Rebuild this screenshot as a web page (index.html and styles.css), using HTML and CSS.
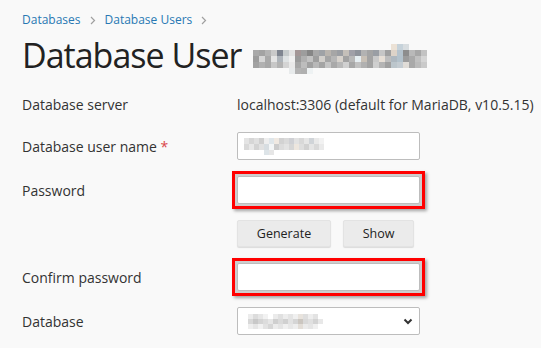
FILE: index.html
```html
<!DOCTYPE html>
<html lang="en">
<head>
  <meta charset="UTF-8" />
  <title>Database User</title>
  <link rel="stylesheet" href="styles.css">
</head>
<body>
  <!-- Breadcrumbs -->
  <nav class="breadcrumbs">
    <a href="#databases">Databases</a>
    <svg class="crumb-sep" width="6" height="9" viewBox="0 0 6 9"><path d="M1 1l3.5 3.5L1 8" fill="none" stroke="#a0a0a0" stroke-width="1.2"/></svg>
    <a href="#users">Database Users</a>
    <svg class="crumb-sep" width="6" height="9" viewBox="0 0 6 9"><path d="M1 1l3.5 3.5L1 8" fill="none" stroke="#a0a0a0" stroke-width="1.2"/></svg>
  </nav>

  <!-- Title (user name is blurred) -->
  <h1 class="page-title">Database User
    <svg class="mosaic-title" width="175" height="33" viewBox="0 0 175 33">
      <!-- ascenders -->
      <rect x="138" y="2" width="6" height="6" fill="#ece2d6"/>
      <rect x="144" y="2" width="6" height="6" fill="#c6d2da"/>
      <rect x="150" y="2" width="6" height="6" fill="#d8dde0"/>
      <!-- row 1 -->
      <rect x="0" y="8" width="6" height="6" fill="#a9a9a9"/>
      <rect x="6" y="8" width="6" height="6" fill="#a3a3a3"/>
      <rect x="12" y="8" width="6" height="6" fill="#b4b4b4"/>
      <rect x="18" y="8" width="6" height="6" fill="#c9c9c9"/>
      <rect x="24" y="8" width="6" height="6" fill="#7f8590"/>
      <rect x="30" y="8" width="6" height="6" fill="#c6cbcc"/>
      <rect x="36" y="8" width="6" height="6" fill="#e2e2e2"/>
      <rect x="42" y="8" width="6" height="6" fill="#a39696"/>
      <rect x="48" y="8" width="6" height="6" fill="#9d9d9d"/>
      <rect x="54" y="8" width="6" height="6" fill="#868686"/>
      <rect x="60" y="8" width="6" height="6" fill="#a8a8a8"/>
      <rect x="66" y="8" width="6" height="6" fill="#9fa2a6"/>
      <rect x="72" y="8" width="6" height="6" fill="#b9b4ae"/>
      <rect x="78" y="8" width="6" height="6" fill="#a6a6a6"/>
      <rect x="84" y="8" width="6" height="6" fill="#9b9ea3"/>
      <rect x="90" y="8" width="6" height="6" fill="#c4bfb9"/>
      <rect x="96" y="8" width="6" height="6" fill="#a0a0a8"/>
      <rect x="102" y="8" width="6" height="6" fill="#8f939b"/>
      <rect x="108" y="8" width="6" height="6" fill="#b2b2b2"/>
      <rect x="114" y="8" width="6" height="6" fill="#a4a4a4"/>
      <rect x="120" y="8" width="6" height="6" fill="#9a9ea4"/>
      <rect x="126" y="8" width="6" height="6" fill="#c6c6c6"/>
      <rect x="132" y="8" width="6" height="6" fill="#a0a0a0"/>
      <rect x="138" y="8" width="6" height="6" fill="#ddd3c8"/>
      <rect x="144" y="8" width="6" height="6" fill="#b5c3cd"/>
      <rect x="150" y="8" width="6" height="6" fill="#8d8d8d"/>
      <rect x="156" y="8" width="6" height="6" fill="#b9b9b9"/>
      <rect x="162" y="8" width="6" height="6" fill="#a7a7a7"/>
      <rect x="168" y="8" width="6" height="6" fill="#c3c3c3"/>
      <!-- row 2 -->
      <rect x="0" y="14" width="6" height="6" fill="#9c9c9c"/>
      <rect x="6" y="14" width="6" height="6" fill="#d6d6d6"/>
      <rect x="12" y="14" width="6" height="6" fill="#a9a9a9"/>
      <rect x="18" y="14" width="6" height="6" fill="#e4e4e4"/>
      <rect x="24" y="14" width="6" height="6" fill="#aeb4ba"/>
      <rect x="30" y="14" width="6" height="6" fill="#dfe3e4"/>
      <rect x="36" y="14" width="6" height="6" fill="#f0f0f0"/>
      <rect x="42" y="14" width="6" height="6" fill="#9a9a9a"/>
      <rect x="48" y="14" width="6" height="6" fill="#b0b0b0"/>
      <rect x="54" y="14" width="6" height="6" fill="#c2c2c2"/>
      <rect x="60" y="14" width="6" height="6" fill="#9e9e9e"/>
      <rect x="66" y="14" width="6" height="6" fill="#d2cfcb"/>
      <rect x="72" y="14" width="6" height="6" fill="#a5a5a5"/>
      <rect x="78" y="14" width="6" height="6" fill="#b6b6b6"/>
      <rect x="84" y="14" width="6" height="6" fill="#d7d2cc"/>
      <rect x="90" y="14" width="6" height="6" fill="#a2a2a2"/>
      <rect x="96" y="14" width="6" height="6" fill="#b8b8b8"/>
      <rect x="102" y="14" width="6" height="6" fill="#e6eef2"/>
      <rect x="108" y="14" width="6" height="6" fill="#c8c0b6"/>
      <rect x="114" y="14" width="6" height="6" fill="#a3a3a3"/>
      <rect x="120" y="14" width="6" height="6" fill="#c9c9c9"/>
      <rect x="126" y="14" width="6" height="6" fill="#e7dfd6"/>
      <rect x="132" y="14" width="6" height="6" fill="#bdbdbd"/>
      <rect x="138" y="14" width="6" height="6" fill="#aeb8c0"/>
      <rect x="144" y="14" width="6" height="6" fill="#b3c2cc"/>
      <rect x="150" y="14" width="6" height="6" fill="#9c9c9c"/>
      <rect x="156" y="14" width="6" height="6" fill="#a9a9a9"/>
      <rect x="162" y="14" width="6" height="6" fill="#c0c0c0"/>
      <rect x="168" y="14" width="6" height="6" fill="#d5d5d5"/>
      <!-- row 3 -->
      <rect x="0" y="20" width="6" height="6" fill="#a2a2a2"/>
      <rect x="6" y="20" width="6" height="6" fill="#b1b1b1"/>
      <rect x="12" y="20" width="6" height="6" fill="#a8a8a8"/>
      <rect x="18" y="20" width="6" height="6" fill="#c7c7c7"/>
      <rect x="24" y="20" width="6" height="6" fill="#b3b3b3"/>
      <rect x="30" y="20" width="6" height="6" fill="#d4d4d4"/>
      <rect x="36" y="20" width="6" height="6" fill="#e9e9e9"/>
      <rect x="42" y="20" width="6" height="6" fill="#a6a6a6"/>
      <rect x="48" y="20" width="6" height="6" fill="#bdbdbd"/>
      <rect x="54" y="20" width="6" height="6" fill="#a1a1a1"/>
      <rect x="60" y="20" width="6" height="6" fill="#b8b8b8"/>
      <rect x="66" y="20" width="6" height="6" fill="#a4a4a4"/>
      <rect x="72" y="20" width="6" height="6" fill="#c5c5c5"/>
      <rect x="78" y="20" width="6" height="6" fill="#a9a9a9"/>
      <rect x="84" y="20" width="6" height="6" fill="#b9b9b9"/>
      <rect x="90" y="20" width="6" height="6" fill="#d0d0d0"/>
      <rect x="96" y="20" width="6" height="6" fill="#a7a7a7"/>
      <rect x="102" y="20" width="6" height="6" fill="#c1c1c1"/>
      <rect x="108" y="20" width="6" height="6" fill="#b1b1b1"/>
      <rect x="114" y="20" width="6" height="6" fill="#a3a3a3"/>
      <rect x="120" y="20" width="6" height="6" fill="#cfcfcf"/>
      <rect x="126" y="20" width="6" height="6" fill="#b4b4b4"/>
      <rect x="132" y="20" width="6" height="6" fill="#a0a0a0"/>
      <rect x="138" y="20" width="6" height="6" fill="#bcc6cc"/>
      <rect x="144" y="20" width="6" height="6" fill="#c4ccd2"/>
      <rect x="150" y="20" width="6" height="6" fill="#e0dcd7"/>
      <rect x="156" y="20" width="6" height="6" fill="#a9a9a9"/>
      <rect x="162" y="20" width="6" height="6" fill="#bbbbbb"/>
      <rect x="168" y="20" width="6" height="6" fill="#cacaca"/>
      <!-- underscore -->
      <rect x="36" y="26" width="6" height="6" fill="#e8ebec"/>
      <rect x="42" y="26" width="6" height="6" fill="#b3b3b3"/>
      <rect x="48" y="26" width="6" height="6" fill="#b0b0b0"/>
      <rect x="54" y="26" width="6" height="6" fill="#eef2f3"/>
    </svg>
  </h1>

  <!-- Form -->
  <form class="form">
    <div class="row row-static">
      <div class="label">Database server</div>
      <div class="value">localhost:3306 (default for MariaDB, v10.5.15)</div>
    </div>

    <div class="row">
      <div class="label">Database user name <span class="required">*</span></div>
      <div class="field">
        <svg width="85" height="17" viewBox="0 0 85 17">
          <rect x="0" y="0" width="5" height="6" fill="#e4e4e4"/>
          <rect x="5" y="0" width="5" height="6" fill="#d6d6d6"/>
          <rect x="10" y="0" width="5" height="6" fill="#e0e0e0"/>
          <rect x="15" y="0" width="5" height="6" fill="#cfcfcf"/>
          <rect x="20" y="0" width="5" height="6" fill="#eeeeee"/>
          <rect x="25" y="0" width="5" height="6" fill="#dfe6ea"/>
          <rect x="30" y="0" width="5" height="6" fill="#f0e9e2"/>
          <rect x="35" y="0" width="5" height="6" fill="#d2d2d2"/>
          <rect x="40" y="0" width="5" height="6" fill="#dadada"/>
          <rect x="45" y="0" width="5" height="6" fill="#cfd0d4"/>
          <rect x="50" y="0" width="5" height="6" fill="#e2e2e2"/>
          <rect x="55" y="0" width="5" height="6" fill="#d8d8d8"/>
          <rect x="60" y="0" width="5" height="6" fill="#e6e6e6"/>
          <rect x="65" y="0" width="5" height="6" fill="#d0d4d8"/>
          <rect x="70" y="0" width="5" height="6" fill="#e9e9e9"/>
          <rect x="75" y="0" width="5" height="6" fill="#f2f2f2"/>
          <rect x="0" y="6" width="5" height="6" fill="#d9d9d9"/>
          <rect x="5" y="6" width="5" height="6" fill="#e8e8e8"/>
          <rect x="10" y="6" width="5" height="6" fill="#d3d3d3"/>
          <rect x="15" y="6" width="5" height="6" fill="#e1e1e1"/>
          <rect x="20" y="6" width="5" height="6" fill="#d7dde1"/>
          <rect x="25" y="6" width="5" height="6" fill="#f4f6f7"/>
          <rect x="30" y="6" width="5" height="6" fill="#cccccc"/>
          <rect x="35" y="6" width="5" height="6" fill="#dcdcdc"/>
          <rect x="40" y="6" width="5" height="6" fill="#e3e3e3"/>
          <rect x="45" y="6" width="5" height="6" fill="#d6d6d6"/>
          <rect x="50" y="6" width="5" height="6" fill="#ede6de"/>
          <rect x="55" y="6" width="5" height="6" fill="#dedede"/>
          <rect x="60" y="6" width="5" height="6" fill="#d1d1d1"/>
          <rect x="65" y="6" width="5" height="6" fill="#e5e5e5"/>
          <rect x="70" y="6" width="5" height="6" fill="#d9d9d9"/>
          <rect x="75" y="6" width="5" height="6" fill="#eaeaea"/>
          <rect x="20" y="12" width="5" height="5" fill="#dde4e8"/>
          <rect x="25" y="12" width="5" height="5" fill="#e6e6e6"/>
        </svg>
      </div>
    </div>

    <div class="row">
      <div class="label">Password</div>
      <div class="highlight"><input class="input" type="password"></div>
    </div>

    <div class="row row-buttons">
      <button type="button" class="btn btn-generate">Generate</button>
      <button type="button" class="btn btn-show">Show</button>
    </div>

    <div class="row">
      <div class="label">Confirm password</div>
      <div class="highlight"><input class="input" type="password"></div>
    </div>

    <div class="row">
      <div class="label">Database</div>
      <div class="field field-select">
        <svg width="76" height="15" viewBox="0 0 76 15">
          <rect x="0" y="0" width="5" height="5" fill="#ececec"/>
          <rect x="5" y="0" width="5" height="5" fill="#dcdcdc"/>
          <rect x="10" y="0" width="5" height="5" fill="#e6e6e6"/>
          <rect x="15" y="0" width="5" height="5" fill="#f2f2f2"/>
          <rect x="25" y="0" width="5" height="5" fill="#ebebeb"/>
          <rect x="30" y="0" width="5" height="5" fill="#e0e0e0"/>
          <rect x="35" y="0" width="5" height="5" fill="#ededed"/>
          <rect x="40" y="0" width="5" height="5" fill="#e4e4e4"/>
          <rect x="45" y="0" width="5" height="5" fill="#f0f0f0"/>
          <rect x="50" y="0" width="5" height="5" fill="#e8e3dd"/>
          <rect x="55" y="0" width="5" height="5" fill="#dedede"/>
          <rect x="60" y="0" width="5" height="5" fill="#eeeeee"/>
          <rect x="65" y="0" width="5" height="5" fill="#e3e3e3"/>
          <rect x="0" y="5" width="5" height="5" fill="#d8d8d8"/>
          <rect x="5" y="5" width="5" height="5" fill="#c8c8c8"/>
          <rect x="10" y="5" width="5" height="5" fill="#d4d4d4"/>
          <rect x="15" y="5" width="5" height="5" fill="#dcdcdc"/>
          <rect x="20" y="5" width="5" height="5" fill="#e6e6e6"/>
          <rect x="25" y="5" width="5" height="5" fill="#cfcfcf"/>
          <rect x="30" y="5" width="5" height="5" fill="#dadada"/>
          <rect x="35" y="5" width="5" height="5" fill="#d0d0d0"/>
          <rect x="40" y="5" width="5" height="5" fill="#e2e2e2"/>
          <rect x="45" y="5" width="5" height="5" fill="#d5d5d5"/>
          <rect x="50" y="5" width="5" height="5" fill="#cbc6c0"/>
          <rect x="55" y="5" width="5" height="5" fill="#d9d9d9"/>
          <rect x="60" y="5" width="5" height="5" fill="#e0e0e0"/>
          <rect x="65" y="5" width="5" height="5" fill="#d3d3d3"/>
          <rect x="70" y="5" width="5" height="5" fill="#e8e8e8"/>
          <rect x="0" y="10" width="5" height="5" fill="#eeeeee"/>
          <rect x="5" y="10" width="5" height="5" fill="#e5e5e5"/>
          <rect x="10" y="10" width="5" height="5" fill="#f1f1f1"/>
          <rect x="15" y="10" width="5" height="5" fill="#e2e2e2"/>
          <rect x="20" y="10" width="5" height="5" fill="#d6d6d6"/>
          <rect x="25" y="10" width="5" height="5" fill="#ececec"/>
          <rect x="30" y="10" width="5" height="5" fill="#e4e4e4"/>
          <rect x="35" y="10" width="5" height="5" fill="#f0f0f0"/>
          <rect x="40" y="10" width="5" height="5" fill="#e7e7e7"/>
          <rect x="45" y="10" width="5" height="5" fill="#eeeeee"/>
          <rect x="50" y="10" width="5" height="5" fill="#e2ddd7"/>
          <rect x="55" y="10" width="5" height="5" fill="#ebebeb"/>
          <rect x="60" y="10" width="5" height="5" fill="#e5e5e5"/>
          <rect x="65" y="10" width="5" height="5" fill="#f0f0f0"/>
        </svg>
        <svg class="select-arrow" width="10" height="7" viewBox="0 0 10 7"><path d="M1.5 1.5l3.5 3.5 3.5-3.5" fill="none" stroke="#333" stroke-width="2"/></svg>
      </div>
    </div>
  </form>
</body>
</html>
```

FILE: styles.css
```css
body {
  margin: 0;
  padding: 0 22px;
  background-color: #f9f9f9;
  font-family: "Open Sans", Arial, sans-serif;
  color: #333;
}
.breadcrumbs {
  display: flex;
  align-items: center;
  gap: 8px;
  padding-top: 12px;
  font-size: 12px;
  line-height: 16px;
}
.breadcrumbs a {
  color: #2878b3;
  text-decoration: none;
}
.crumb-sep {
  margin: 0 1px;
}
.page-title {
  margin: 7px 0 0;
  font-size: 34px;
  line-height: 40px;
  font-weight: normal;
  letter-spacing: -1px;
  color: #222;
  white-space: nowrap;
}
.mosaic-title {
  margin-left: 4px;
  vertical-align: -7px;
}
.form {
  display: flex;
  flex-direction: column;
  gap: 11px;
  margin-top: 15px;
}
.row {
  display: flex;
  align-items: center;
  min-height: 28px;
  font-size: 14px;
}
.row-static {
  margin-bottom: 3px;
}
.label {
  width: 215px;
  flex: none;
  color: #333;
}
.required {
  color: #d9464a;
}
.value {
  white-space: nowrap;
  color: #333;
}
.input,
.field {
  box-sizing: border-box;
  width: 183px;
  height: 28px;
  margin: 0;
  border: 1px solid #bdbdbd;
  border-radius: 2px;
  background: #fff;
}
.field {
  display: flex;
  align-items: center;
  padding-left: 6px;
}
.field-select {
  padding-left: 10px;
  justify-content: space-between;
  padding-right: 6px;
}
.highlight {
  margin-left: -5px;
  padding: 2px;
  border: 3px solid #f00;
  background: #cdcdcd;
  box-shadow: 2px 2px 3px rgba(0, 0, 0, 0.35);
}
.highlight .input {
  display: block;
}
.row-buttons {
  padding-left: 215px;
  gap: 12px;
  min-height: 27px;
}
.btn {
  height: 27px;
  padding: 0;
  border: 1px solid #e3e3e3;
  border-radius: 2px;
  background-color: #ebebeb;
  box-shadow: 0 1px 1px rgba(0, 0, 0, 0.12);
  font-family: "Open Sans", Arial, sans-serif;
  font-size: 12.5px;
  color: #222;
  cursor: pointer;
}
.btn-generate {
  width: 94px;
}
.btn-show {
  width: 71px;
}
```
